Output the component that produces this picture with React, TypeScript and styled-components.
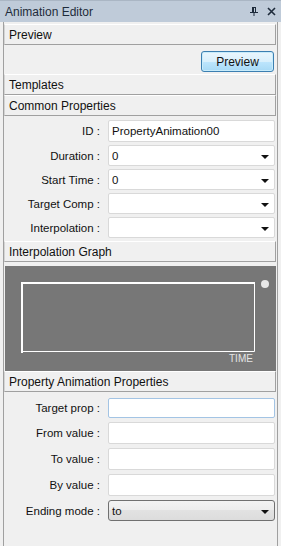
import { FC } from 'react';
import styled, { createGlobalStyle } from 'styled-components';

const GlobalStyle = createGlobalStyle`
  html, body {
    margin: 0;
    padding: 0;
    height: 100%;
    background: #f0f0f0;
  }
  #root {
    height: 100%;
  }
  * {
    box-sizing: border-box;
  }
`;

const Window = styled.div`
  display: flex;
  flex-direction: column;
  height: 100vh;
  font-family: 'Liberation Sans', Arial, sans-serif;
  color: #111;
  background: #f0f0f0;
`;

const TitleBar = styled.div`
  height: 22px;
  display: flex;
  align-items: center;
  padding: 0 4px 0 5px;
  background: #bfcbd9;
  border-top: 1px solid #aab6c4;
  color: #1e2b3b;
  font-size: 12px;
`;

const TitleText = styled.span`
  flex: 1;
`;

const TitleButton = styled.span`
  display: flex;
  align-items: center;
  justify-content: center;
  width: 12px;
  height: 14px;
  margin-left: 5px;
`;

const Frame = styled.div`
  flex: 1;
  display: flex;
  flex-direction: column;
  margin: 0 3px;
  padding-top: 1px;
  border-left: 1px solid #a0a0a0;
  border-right: 1px solid #a0a0a0;
`;

const SectionHeader = styled.div<{ $first?: boolean }>`
  height: 21px;
  margin: ${({ $first }) => ($first ? '1px 1px 0 0' : '0 1px 0 0')};
  padding-left: 4px;
  display: flex;
  align-items: center;
  border-top: 1px solid #ffffff;
  border-bottom: 1px solid #a0a0a0;
  border-right: 1px solid #a0a0a0;
  border-left: 1px solid #d4d4d4;
  font-size: 12px;
  color: #111;
`;

const ButtonBar = styled.div`
  display: flex;
  justify-content: flex-end;
  padding: 6px 3px 2px 0;
`;

const PreviewButton = styled.button`
  width: 73px;
  height: 21px;
  padding: 0;
  border: 1px solid #3c7fb1;
  border-radius: 3px;
  background: linear-gradient(#eaf6fd, #d9f0fc 50%, #bee6fd 50%, #a7d9f5);
  box-shadow: inset 0 0 0 1px #c8ecfb;
  font-family: inherit;
  font-size: 12px;
  color: #111;
`;

const Form = styled.div<{ $top: number; $gap: number }>`
  display: grid;
  grid-template-columns: 96px 1fr;
  column-gap: 8px;
  row-gap: ${({ $gap }) => $gap}px;
  padding: ${({ $top }) => $top}px 2px 3px 0;
  align-items: center;
`;

const Label = styled.div`
  text-align: right;
  font-size: 11.5px;
  color: #111;
  white-space: nowrap;
`;

const Field = styled.div<{ $h?: number; $focused?: boolean }>`
  position: relative;
  height: ${({ $h }) => $h ?? 21}px;
  display: flex;
  align-items: center;
  padding-left: 3px;
  background: #fff;
  border: 1px solid ${({ $focused }) => ($focused ? '#a3c4e4' : '#d9d9d9')};
  border-radius: 2px;
  font-size: 11.5px;
  color: #111;
`;

const Combo = styled(Field)<{ $button?: boolean }>`
  border-color: ${({ $button }) => ($button ? '#707070' : '#d9d9d9')};
  border-radius: ${({ $button }) => ($button ? 3 : 2)}px;
  background: ${({ $button }) => ($button ? 'linear-gradient(#f3f3f3, #ececec 50%, #e2e2e2 50%, #dcdcdc)' : '#fff')};
`;

const Arrow = styled.span`
  position: absolute;
  right: 5px;
  top: 50%;
  margin-top: -1px;
  width: 0;
  height: 0;
  border-left: 4px solid transparent;
  border-right: 4px solid transparent;
  border-top: 4px solid #111;
`;

const GraphPanel = styled.div`
  height: 105px;
  margin: 4px 1px 0 1px;
  background: #777777;
`;

const PinIcon: FC = () => (
  <svg width="8" height="9" viewBox="0 0 8 9">
    <path d="M2 0.5H6M2.5 0V5M5.5 0V5M3.5 0V5M0 5.5H8M4 5.5V9" stroke="#1e2b3b" strokeWidth="1" fill="none" />
  </svg>
);

const CloseIcon: FC = () => (
  <svg width="9" height="9" viewBox="0 0 9 9">
    <path d="M1 1L8 8M8 1L1 8" stroke="#1e2b3b" strokeWidth="1.6" fill="none" />
  </svg>
);

const InterpolationGraph: FC = () => (
  <GraphPanel>
    <svg width="269" height="105" viewBox="0 0 269 105">
      <path d="M16 17H250" stroke="#fff" strokeWidth="2" />
      <path d="M17 16V87" stroke="#fff" strokeWidth="2" />
      <path d="M249.5 17V85.5H16" stroke="#fff" strokeWidth="1" fill="none" />
      <circle cx="260" cy="18" r="4" fill="#e8e8e8" />
      <text x="224" y="96" fontSize="10" fill="#e4e4e4" fontFamily="'Liberation Sans', Arial, sans-serif">
        TIME
      </text>
    </svg>
  </GraphPanel>
);

const App: FC = () => {
  return (
    <Window>
      <GlobalStyle />
      <TitleBar>
        <TitleText>Animation Editor</TitleText>
        <TitleButton>
          <PinIcon />
        </TitleButton>
        <TitleButton>
          <CloseIcon />
        </TitleButton>
      </TitleBar>
      <Frame>
        <SectionHeader $first>Preview</SectionHeader>
        <ButtonBar>
          <PreviewButton>Preview</PreviewButton>
        </ButtonBar>
        <SectionHeader>Templates</SectionHeader>
        <SectionHeader>Common Properties</SectionHeader>
        <Form $top={4} $gap={3}>
          <Label>ID :</Label>
          <Field $h={22}>PropertyAnimation00</Field>
          <Label>Duration :</Label>
          <Combo>
            0<Arrow />
          </Combo>
          <Label>Start Time :</Label>
          <Combo>
            0<Arrow />
          </Combo>
          <Label>Target Comp :</Label>
          <Combo>
            <Arrow />
          </Combo>
          <Label>Interpolation :</Label>
          <Combo>
            <Arrow />
          </Combo>
        </Form>
        <SectionHeader>Interpolation Graph</SectionHeader>
        <InterpolationGraph />
        <SectionHeader>Property Animation Properties</SectionHeader>
        <Form $top={6} $gap={4}>
          <Label>Target prop :</Label>
          <Field $h={20} $focused />
          <Label>From value :</Label>
          <Field $h={22} />
          <Label>To value :</Label>
          <Field $h={22} />
          <Label>By value :</Label>
          <Field $h={22} />
          <Label>Ending mode :</Label>
          <Combo $button>
            to<Arrow />
          </Combo>
        </Form>
      </Frame>
    </Window>
  );
};

export default App;
